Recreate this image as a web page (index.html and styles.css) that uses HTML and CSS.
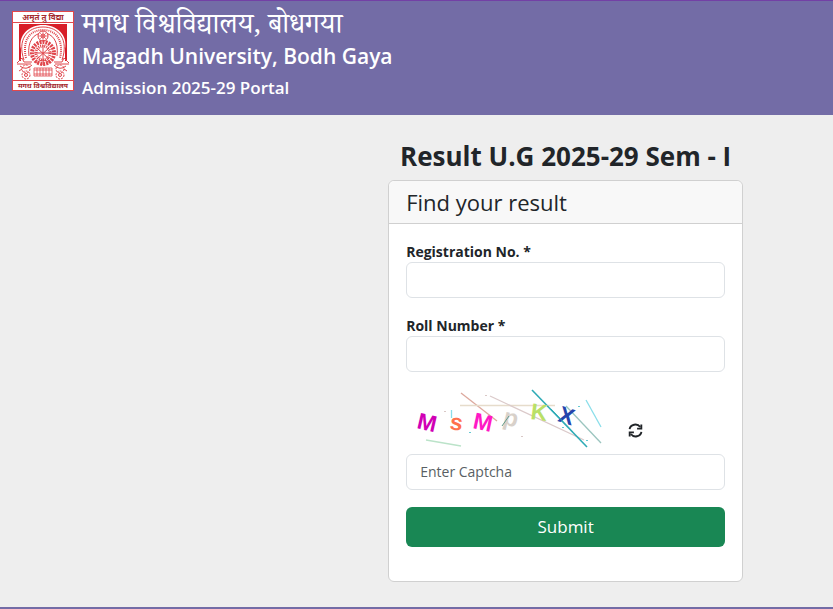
FILE: index.html
```html
<!DOCTYPE html>
<html lang="en">
<head>
<meta charset="utf-8">
<meta name="viewport" content="width=device-width, initial-scale=1">
<title>Magadh University, Bodh Gaya</title>
<link rel="stylesheet" href="styles.css">
</head>
<body>
<header class="site-header">
  <svg class="logo" viewBox="0 0 62 80" role="img" aria-label="Magadh University crest">
    <rect x=".5" y=".5" width="61" height="79" fill="#fff" stroke="#e2474b"/>
    <path d="M0 11.5H62M0 69.5H62" stroke="#e2474b"/>
    <text class="logo-text" x="31" y="8.5">अमृतं तु विद्या</text>
    <text class="logo-text small" x="31" y="77">मगध विश्वविद्यालय</text>
    <path d="M7 13H55V50H7Z" fill="#d81e28"/>
    <path d="M9 54V38C6 24 17 14 31 14S56 24 53 38V54Z" fill="#fff"/>
    <g fill="none" stroke="#e0444a">
      <path d="M12 49C5 29 15 16 31 16S57 29 50 49" stroke-width="1"/>
      <path d="M14 47C10 29 18 19 31 19S52 29 48 47" stroke-width="2" stroke-dasharray="1 1"/>
      <path d="M17 45C15 30 22 22 31 22S47 30 45 45" stroke-width="1"/>
      <circle cx="31" cy="25" r="5" fill="#fff"/>
      <circle cx="31" cy="25" r="2"/>
      <path d="M31 20V30M26 25H36M28 22L34 28M34 22L28 28" stroke-width=".6"/>
      <circle cx="31" cy="42" r="11" stroke-width="4" stroke-dasharray="2 1"/>
      <circle cx="31" cy="42" r="7" stroke-width="3" stroke-dasharray="1 1"/>
      <path d="M31 34V54M25 37L37 48M37 37L25 48M22 42H40M24 52Q31 46 38 52"/>
      <path d="M5 52L10 47L12 51H20M57 52L52 47L50 51H42M5 53H19M43 53H57M8 55Q14 60 20 54M54 55Q48 60 42 54"/>
      <circle cx="14" cy="58" r="4" stroke-dasharray="2 1"/>
      <circle cx="48" cy="58" r="4" stroke-dasharray="2 1"/>
      <circle cx="14" cy="64" r="4" stroke-dasharray="2 1"/>
      <circle cx="48" cy="64" r="4" stroke-dasharray="2 1"/>
      <circle cx="14" cy="64" r="1.500"/>
      <circle cx="48" cy="64" r="1.500"/>
      <path d="M7 60L10 58M55 60L52 58"/>
      <path d="M22 57H40V65H22ZM22 59H40M22 63H40M25 57V65M28 57V65M31 57V65M34 57V65M37 57V65" stroke-width=".8"/>
    </g>
  </svg>
  <div class="titles">
    <div class="title-hindi" lang="hi">मगध विश्वविद्यालय, बोधगया</div>
    <div class="title-main">Magadh University, Bodh Gaya</div>
    <div class="title-sub">Admission 2025-29 Portal</div>
  </div>
</header>
<main class="content">
  <h1>Result U.G 2025-29 Sem - I</h1>
  <section class="card">
    <h2>Find your result</h2>
    <form class="form">
      <div class="field">
        <label for="registration">Registration No. *</label>
        <input id="registration" type="text">
      </div>
      <div class="field">
        <label for="roll">Roll Number *</label>
        <input id="roll" type="text">
      </div>
      <div class="captcha">
        <svg class="captcha-image" viewBox="0 0 200 68" role="img" aria-label="Captcha">
          <g fill="none" stroke-width="1.300">
            <path d="M55 7L91 35" stroke="#dda99e"/>
            <path d="M54 19.500H149" stroke="#e6dccb"/>
            <path d="M84 10L178 54" stroke="#dbcaca"/>
            <path d="M126 4L181 61" stroke="#2eabb6" stroke-width="1.600"/>
            <path d="M160 20L195 57" stroke="#9bc5bf"/>
            <path d="M180 14L195 41" stroke="#8adeea"/>
            <path d="M20 54L55 60" stroke="#bbe3c9"/>
            <path d="M45.500 24V32" stroke="#8adeea"/>
          </g>
          <g class="captcha-letters">
            <text font-size="23" fill="#d000b5" transform="translate(10 42) rotate(13)">M</text>
            <text font-size="23" fill="#ff714d" transform="translate(43 43) rotate(9)">s</text>
            <text font-size="23" fill="#ff18c5" transform="translate(66 42) rotate(12)">M</text>
            <text font-size="24" fill="#d8d1ca" transform="translate(96 38) rotate(14)">p</text>
            <text font-size="23" fill="#bae067" transform="translate(124 33) rotate(7)">K</text>
            <text font-size="23" fill="#2445ac" transform="translate(151 35) rotate(17)">X</text>
          </g>
          <path d="M96 40L103 30" stroke="#609b8e"/>
          <path d="M145 23L167 46" stroke="#2eabb6"/>
          <path d="M63 46h2v1h-2zM172 20h2v1h-2zM156 41h2v1h-2zM180 54h2v1h-2z" fill="#66c9d2"/>
          <path d="M79 9h2v1h-2zM38 25h2v1h-2zM115 50h2v1h-2z" fill="#d9c8c6"/>
        </svg>
        <button class="refresh" type="button" aria-label="Refresh captcha">
          <svg viewBox="0 0 16 16" fill="none" stroke="#212529" stroke-width="2">
            <path d="M1.700 6.500A6.200 5.600 0 0 1 13 4.200M14.300 9.500A6.200 5.600 0 0 1 3 11.800"/>
            <path d="M14.200 1.500V6H9.700M1.800 14.500V10H6.300"/>
          </svg>
        </button>
      </div>
      <input type="text" placeholder="Enter Captcha" aria-label="Enter Captcha">
      <button class="submit" type="submit">Submit</button>
    </form>
  </section>
</main>
<footer class="site-footer"></footer>
</body>
</html>
```
FILE: styles.css
```css
* { box-sizing: border-box; }

body {
  margin: 0;
  min-height: 100vh;
  display: flex;
  flex-direction: column;
  background: #eee;
  color: #212529;
  font: 14px/20px "Open Sans", "Noto Sans", sans-serif;
}

.site-header {
  display: flex;
  gap: 8px;
  padding: 10px 12px 17px;
  border-top: 1px solid #7340a5;
  background: #736ca6;
  color: #fff;
}

.logo { width: 62px; height: 80px; flex: none; }

.logo-text {
  font: bold 8px "Noto Sans Devanagari", "Noto Sans", sans-serif;
  fill: #a52b31;
  text-anchor: middle;
}

.logo-text.small { font-size: 7px; }

.titles { padding-top: 3px; font-weight: 600; }

.title-hindi {
  font: 28px/30px "Noto Serif Devanagari", "Noto Sans Devanagari", "Noto Sans", serif;
}

.title-main { font-size: 21px; line-height: 24px; }

.title-sub { margin-top: 10px; font-size: 17px; line-height: 20px; }

.content {
  flex: 1;
  padding: 25px 10.8% 25px 46.6%;
}

h1 {
  margin: 0 0 7px;
  font-size: 26px;
  line-height: 33px;
  text-align: center;
}

.card {
  border: 1px solid #d0d0d0;
  border-radius: 6px;
  background: #fff;
}

h2 {
  margin: 0;
  padding: 8px 17px;
  border-bottom: 1px solid #d0d0d0;
  border-radius: 6px 6px 0 0;
  background: #f8f8f8;
  font-size: 22px;
  font-weight: 400;
  line-height: 26px;
}

.form { padding: 18px 17px 34px; }

.field { margin-bottom: 18px; }

label { display: block; font-weight: 700; }

input {
  display: block;
  width: 100%;
  height: 36px;
  padding: 5px 13px 7px;
  border: 1px solid #dee2e6;
  border-radius: 6px;
  background: #fff;
  color: inherit;
  font: inherit;
}

input::placeholder { color: #595f64; opacity: 1; }

.captcha {
  display: flex;
  align-items: center;
  gap: 22px;
  margin-top: -4px;
}

.captcha-image { width: 200px; height: 68px; }

.captcha-letters { font-family: "Liberation Sans", sans-serif; font-weight: 700; }

.refresh {
  margin-top: 20px;
  padding: 0;
  border: 0;
  background: none;
}

.refresh svg { display: block; width: 15px; height: 15px; }

.submit {
  display: block;
  width: 100%;
  height: 40px;
  margin-top: 17px;
  border: 0;
  border-radius: 6px;
  background: #198754;
  color: #fff;
  font: 17px/24px "Open Sans", "Noto Sans", sans-serif;
}

.site-footer { height: 2px; background: #736ca6; }
```
